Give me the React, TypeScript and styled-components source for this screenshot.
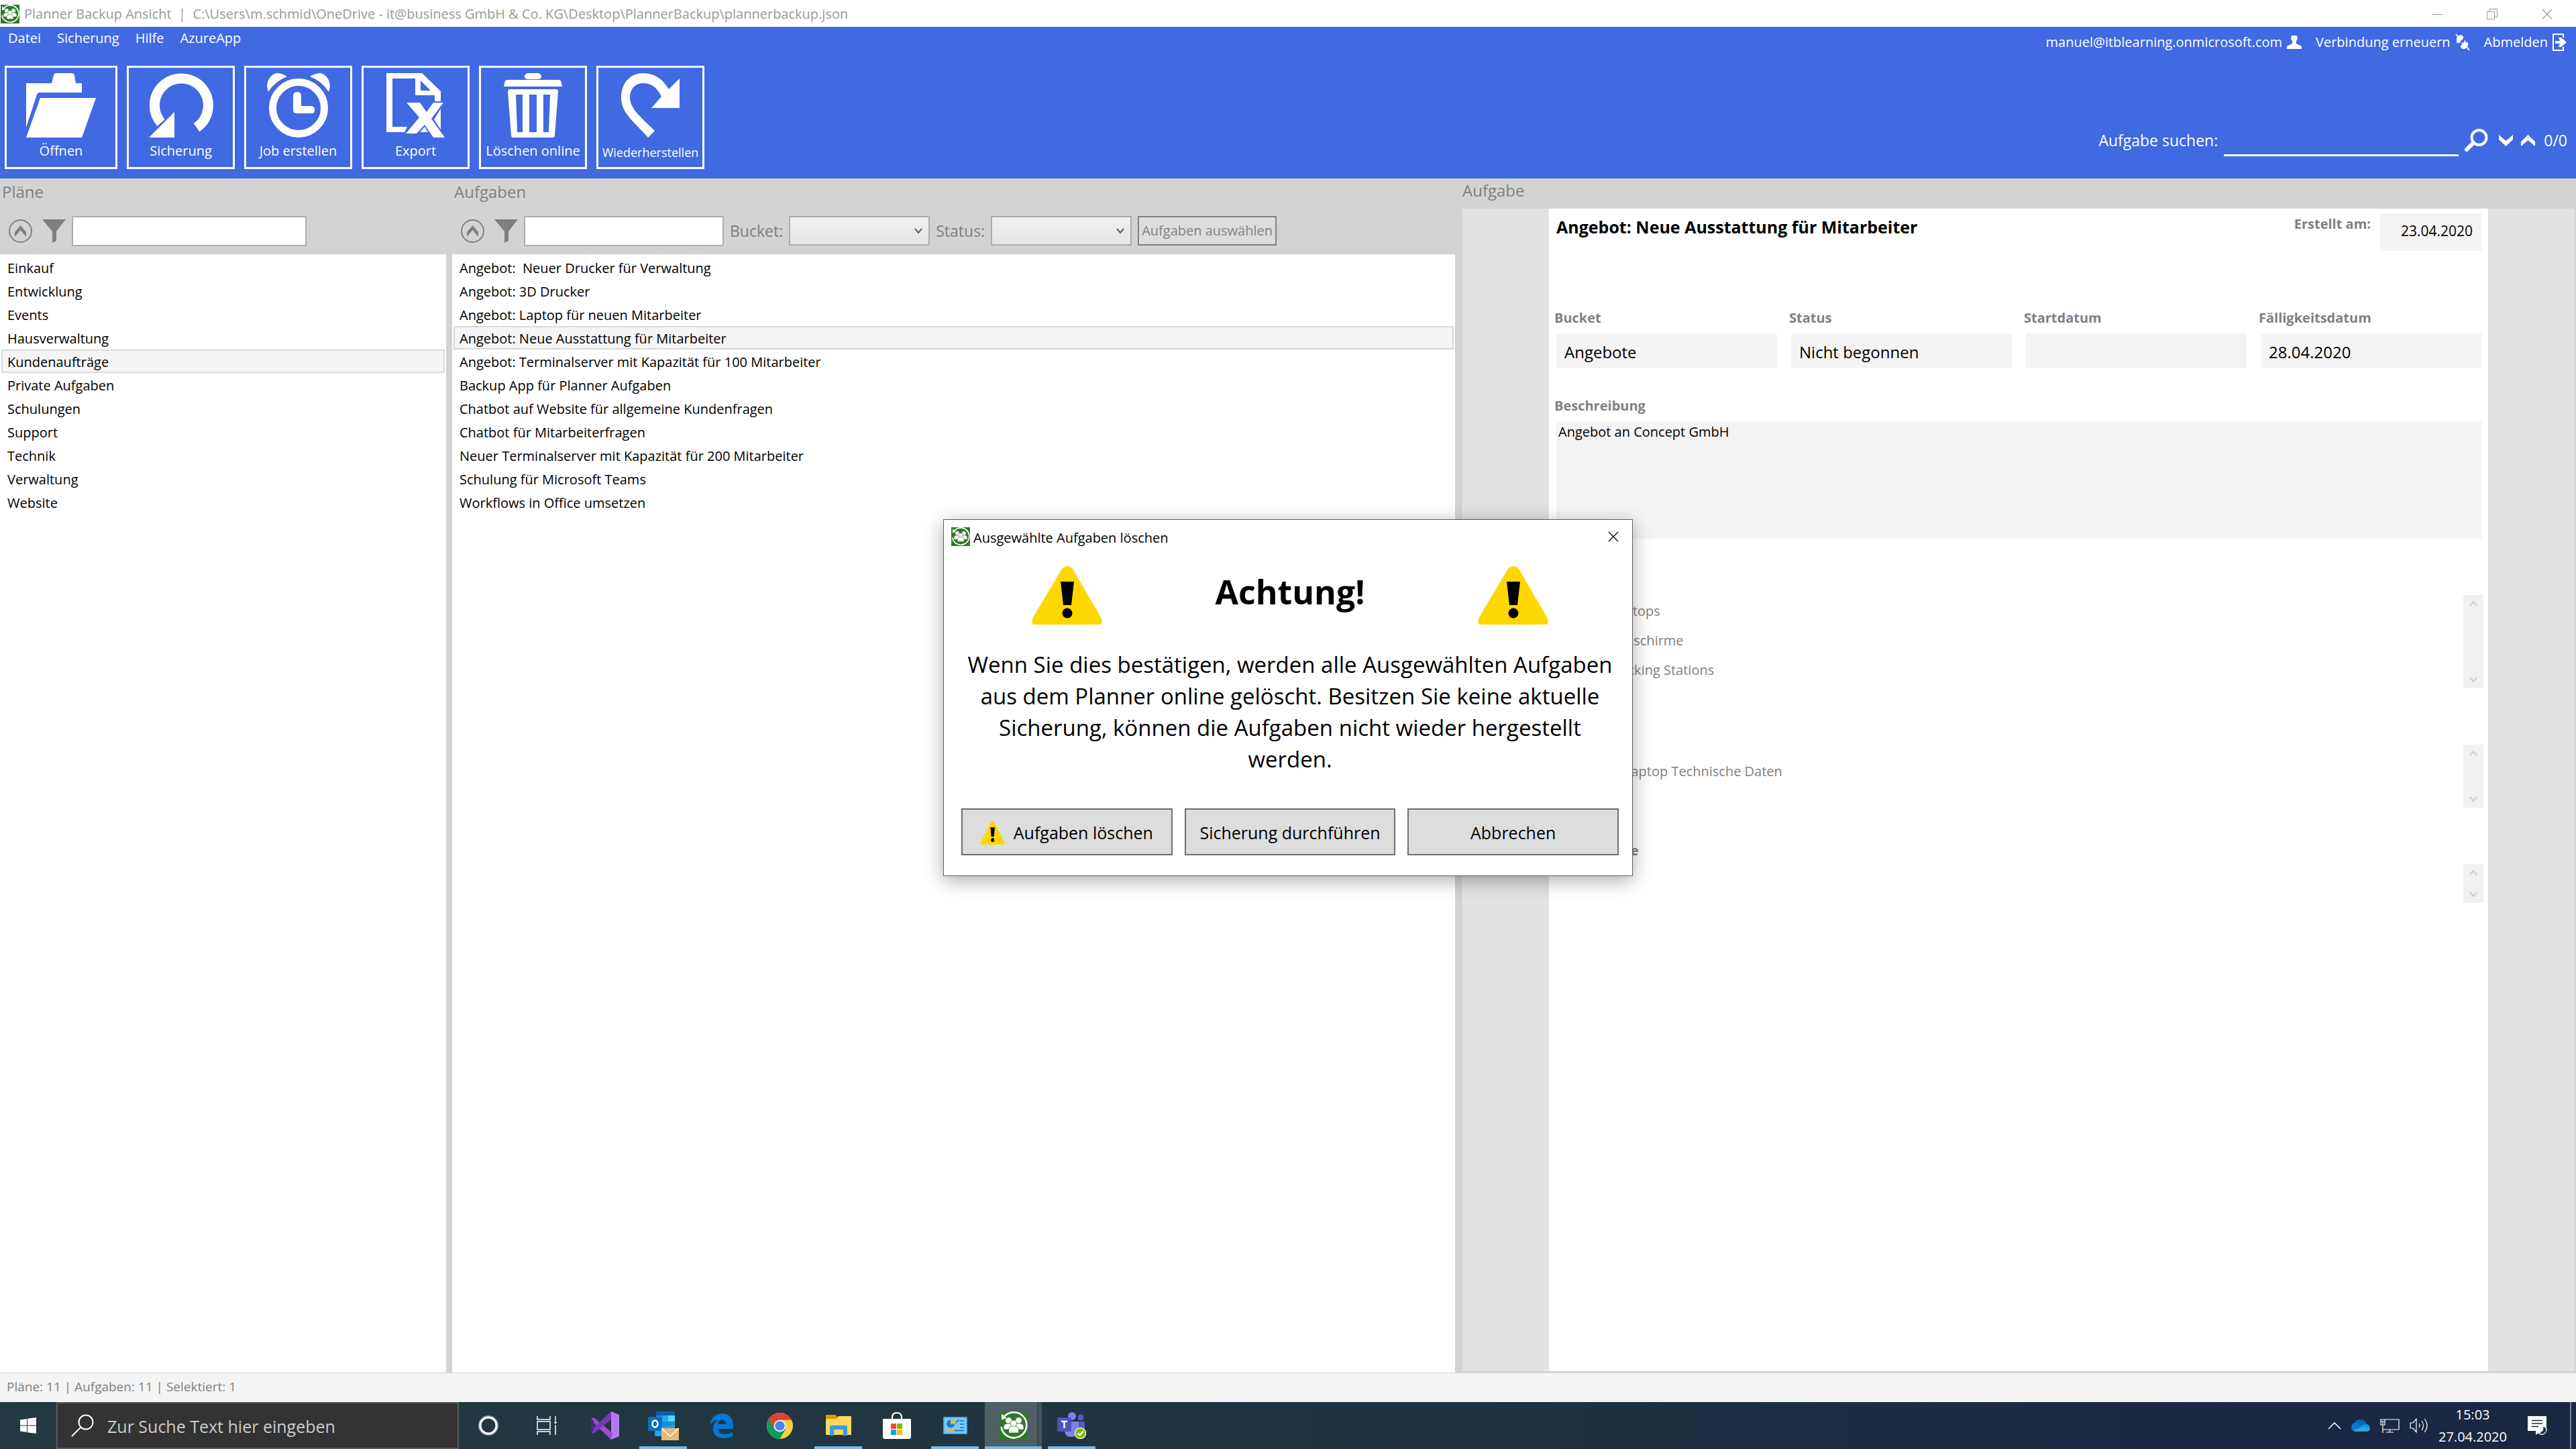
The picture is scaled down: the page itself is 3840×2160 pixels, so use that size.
import React from "react";
import styled, { createGlobalStyle } from "styled-components";

const Global = createGlobalStyle`
  * { box-sizing: border-box; }
  html, body { margin: 0; padding: 0; }
  body, button, input, select, textarea {
    font-family: "Open Sans", "Noto Sans", sans-serif;
    font-size: 20px;
    line-height: 28px;
    color: #000;
  }
  button { border: 0; padding: 0; background: none; cursor: pointer; }
  h1, h2, h3, p, ul { margin: 0; padding: 0; font-weight: 400; }
  ul { list-style: none; }
  svg { display: block; flex: none; }
`;

const Screen = styled.div`
  position: relative;
  min-height: 100vh;
  display: flex;
  flex-direction: column;
  background: #fff;
  overflow: hidden;
`;

/* ---------- window frame ---------- */

const TitleBar = styled.header`
  display: flex;
  align-items: center;
  gap: 7px;
  height: 40px;
  padding: 2px 35px 0 1px;
  color: #999;
`;

const TitleText = styled.h1`
  flex: 1;
  font-size: 20px;
  white-space: pre;
`;

const WindowControls = styled.div`
  display: flex;
  gap: 66px;
`;

const Ribbon = styled.div`
  display: flex;
  justify-content: space-between;
  height: 226px;
  background: #4169e1;
  color: #fff;
`;

const RibbonLeft = styled.div`
  display: flex;
  flex-direction: column;
  gap: 24px;
`;

const Menu = styled.nav`
  display: flex;
  gap: 24px;
  height: 34px;
  padding-left: 12px;
`;

const MenuItem = styled.button`
  color: #fff;
`;

const Tools = styled.div`
  display: flex;
  gap: 14px;
  padding-left: 7px;
`;

const Tool = styled.button<{ $wide?: boolean }>`
  display: flex;
  flex-direction: column;
  align-items: center;
  gap: 6px;
  width: ${(p) => (p.$wide ? 168 : 161)}px;
  height: 154px;
  padding-top: 8px;
  border: 3px solid #fff;
  color: #fff;
`;

const ToolLabel = styled.span<{ $small?: boolean }>`
  font-size: ${(p) => (p.$small ? 18 : 20)}px;
  line-height: ${(p) => (p.$small ? 32 : 28)}px;
  white-space: nowrap;
`;

const RibbonRight = styled.div`
  display: flex;
  flex-direction: column;
  align-items: flex-end;
  justify-content: space-between;
  padding: 3px 13px 33px 0;
`;

const Account = styled.div`
  display: flex;
  align-items: center;
  gap: 21px;
  height: 40px;
`;

const AccountItem = styled.button`
  display: flex;
  align-items: center;
  gap: 7px;
  color: #fff;
`;

const Search = styled.div`
  display: flex;
  align-items: center;
  gap: 9px;
  height: 43px;
  font-size: 23px;
  > :not(input) { margin-bottom: 5px; }
`;

const SearchInput = styled.input`
  width: 350px;
  height: 43px;
  border: 0;
  border-bottom: 3px solid #fff;
  background: transparent;
  color: #fff;
  outline: 0;
`;

const Hits = styled.span`
  padding-left: 4px;
`;

const IconButton = styled.button<{ $pad?: number }>`
  display: flex;
  padding-left: ${(p) => p.$pad ?? 0}px;
`;

/* ---------- panels ---------- */

const Main = styled.main`
  flex: 1;
  display: grid;
  grid-template-columns: 665fr 9px 1495fr 11px 1660fr;
  background: #d3d3d3;
`;

const Panel = styled.section`
  display: flex;
  flex-direction: column;
  min-width: 0;
`;

const PanelTitle = styled.h2<{ $detail?: boolean }>`
  height: ${(p) => (p.$detail ? 45 : 43)}px;
  padding-left: ${(p) => (p.$detail ? 0 : 3)}px;
  font-size: 24px;
  line-height: ${(p) => (p.$detail ? 36 : 40)}px;
  color: #808080;
`;

const FilterBar = styled.div`
  display: flex;
  align-items: center;
  height: 70px;
  padding-left: 13px;
  gap: 9px;
  color: #808080;
`;

const FilterIcons = styled.div`
  display: flex;
  gap: 15px;
`;

const FilterInput = styled.input<{ $width: number }>`
  width: ${(p) => p.$width}px;
  height: 45px;
  border: 2px solid #abadb3;
  background: #fff;
  outline: 0;
`;

const FilterLabel = styled.label`
  font-size: 23px;
`;

const SelectBox = styled.span`
  display: inline-grid;
  align-items: center;
  justify-items: end;
  > * { grid-area: 1 / 1; }
  > svg { margin-right: 11px; pointer-events: none; }
`;

const Select = styled.select`
  appearance: none;
  width: 210px;
  height: 44px;
  border: 2px solid #acacac;
  border-radius: 0;
  background: linear-gradient(#f0f0f0, #e5e5e5);
`;

const PickButton = styled.button`
  height: 44px;
  padding: 0 4px;
  border: 2px solid #808080;
  background: #ddd;
  color: #838383;
  white-space: nowrap;
`;

const List = styled.ul`
  flex: 1;
  padding: 2px;
  background: #fff;
`;

const Row = styled.button<{ $active: boolean }>`
  display: block;
  width: 100%;
  height: 35px;
  padding: 2px 7px 0;
  border: 2px solid ${(p) => (p.$active ? "#dadada" : "transparent")};
  background: ${(p) => (p.$active ? "#f5f5f5" : "transparent")};
  line-height: 28px;
  text-align: left;
  white-space: pre;
`;

const DetailArea = styled.div`
  flex: 1;
  display: flex;
  justify-content: center;
  border-right: 2px solid #d3d3d3;
  border-bottom: 2px solid #d3d3d3;
  background: #e2e2e2;
`;

const Card = styled.article`
  width: 1400px;
  padding: 7px 10px 0 11px;
  background: #fff;
`;

const CardHead = styled.div`
  display: flex;
  height: 140px;
`;

const CardTitle = styled.h3`
  flex: 1;
  font-size: 25px;
  line-height: 40px;
  font-weight: 700;
`;

const Caption = styled.label`
  display: block;
  margin-left: -3px;
  font-size: 20px;
  line-height: 32px;
  font-weight: 700;
  color: #808080;
`;

const DateField = styled.input`
  width: 151px;
  height: 56px;
  margin-left: 14px;
  padding: 0 13px 4px 0;
  border: 0;
  background: #f4f4f4;
  font-size: 21px;
  text-align: right;
`;

const Fields = styled.div`
  display: grid;
  grid-template-columns: repeat(4, 1fr);
  gap: 21px;
  padding-bottom: 40px;
`;

const Field = styled.input`
  display: block;
  width: 100%;
  height: 52px;
  margin-top: 7px;
  padding: 2px 12px 0;
  border: 0;
  background: #f4f4f4;
  font-size: 24px;
`;

const Description = styled.textarea`
  display: block;
  width: 100%;
  height: 175px;
  margin-top: 7px;
  padding: 2px 3px;
  border: 0;
  background: #f4f4f4;
  resize: none;
  outline: 0;
`;

const Group = styled.section<{ $untitled?: boolean }>`
  padding-top: ${(p) => (p.$untitled ? 80 : 48)}px;
`;

const GroupBody = styled.div<{ $height: number }>`
  display: flex;
  justify-content: space-between;
  height: ${(p) => p.$height}px;
  margin: 4px -3px 0 0;
`;

const GroupTitle = styled(Caption).attrs({ as: "h3" })`
  margin-left: -9px;
`;

const Items = styled.ul<{ $top?: number }>`
  display: flex;
  flex-direction: column;
  padding-top: ${(p) => p.$top ?? 2}px;
  color: #808080;
`;

const Item = styled.li`
  display: flex;
  align-items: center;
  height: 44px;
  padding-left: 32px;
`;

const ItemLabel = styled.label`
  display: flex;
  align-items: center;
  gap: 24px;
`;

const Check = styled.input`
  width: 24px;
  height: 24px;
  margin: 0;
`;

const Link = styled.a`
  padding-left: 69px;
  color: #808080;
  text-decoration: none;
`;

const Scrollbar = styled.div`
  display: flex;
  flex-direction: column;
  align-items: center;
  justify-content: space-between;
  width: 30px;
  padding: 8px 0;
  background: #f0f0f0;
`;

const StatusBar = styled.footer`
  height: 44px;
  padding: 3px 10px;
  border-top: 1px solid #cdd6f4;
  background: #f4f4f4;
  font-size: 19px;
  line-height: 34px;
  color: #808080;
`;

/* ---------- dialog ---------- */

const Overlay = styled.div`
  position: absolute;
  inset: 0 0 80px;
  display: flex;
  align-items: center;
  justify-content: center;
`;

const Dialog = styled.div`
  width: 1028px;
  padding: 0 20px 30px 26px;
  border: 1px solid #5f5f5f;
  background: #fff;
  box-shadow: 0 6px 26px rgba(0, 0, 0, 0.34);
`;

const DialogBar = styled.div`
  display: flex;
  align-items: center;
  gap: 5px;
  height: 50px;
  margin-left: -15px;
`;

const DialogTitle = styled.h2`
  flex: 1;
  padding-top: 3px;
  font-size: 20px;
`;

const DialogHead = styled.div`
  display: grid;
  grid-template-columns: repeat(3, 1fr);
  gap: 18px;
  align-items: center;
  justify-items: center;
  height: 125px;
`;

const Attention = styled.h3`
  padding-bottom: 12px;
  font-size: 50px;
  line-height: 60px;
  font-weight: 700;
`;

const Message = styled.p`
  margin-top: 17px;
  height: 238px;
  font-size: 33px;
  line-height: 47px;
  text-align: center;
`;

const Actions = styled.div`
  display: grid;
  grid-template-columns: repeat(3, 1fr);
  gap: 18px;
`;

const ActionButton = styled.button`
  display: flex;
  align-items: center;
  justify-content: center;
  gap: 14px;
  height: 70px;
  padding-top: 2px;
  border: 2px solid #707070;
  background: #ddd;
  font-size: 25px;
`;

/* ---------- taskbar ---------- */

const Taskbar = styled.div`
  display: flex;
  height: 70px;
  background: linear-gradient(90deg, #233a42 0%, #20343f 45%, #1c2843 85%, #1a2742 100%);
  color: #fff;
`;

const StartButton = styled.button`
  display: flex;
  align-items: center;
  justify-content: center;
  width: 84px;
`;

const TaskSearch = styled.label`
  display: flex;
  align-items: center;
  gap: 20px;
  width: 600px;
  padding-left: 20px;
  border: 2px solid #5c5c5c;
  background: #333;
`;

const TaskSearchInput = styled.input`
  flex: 1;
  border: 0;
  padding: 2px 0 0;
  background: transparent;
  color: #ccc;
  font-size: 25px;
  line-height: 36px;
  outline: 0;
  &::placeholder { color: #ccc; opacity: 1; }
`;

const TaskButton = styled.button<{ $open?: boolean; $active?: boolean }>`
  display: flex;
  align-items: center;
  justify-content: center;
  width: ${(p) => (p.$active ? 85 : 71)}px;
  margin: 0 ${(p) => (p.$active ? 1 : 8)}px;
  border-top: 4px solid transparent;
  border-bottom: 4px solid ${(p) => (p.$open || p.$active ? "#76b9ed" : "transparent")};
  background: ${(p) =>
    p.$active ? "linear-gradient(90deg, #4e5f66 78px, #33444d 78px, #33444d 80px, #46555c 80px)" : "none"};
  background-clip: border-box;
  background-origin: border-box;
`;

const Tray = styled.div`
  display: flex;
  align-items: center;
  margin-left: auto;
`;

const TrayIcons = styled.div`
  display: flex;
  align-items: center;
  gap: 15px;
`;

const Clock = styled.time`
  display: block;
  padding: 0 31px 0 16px;
  font-size: 20px;
  line-height: 33px;
  text-align: center;
`;

const TrayEdge = styled.span`
  width: 9px;
  height: 70px;
  margin-left: 34px;
  border-left: 2px solid #7c8494;
`;

/* ---------- drawings ---------- */

const Logo = ({ size }: { size: number }) => (
  <svg width={size} height={size} viewBox="0 0 42 42">
    <rect width="42" height="42" fill="#31782c" />
    <path d="M6 9A19 19 0 1 1 2.500 23" fill="none" stroke="#fff" strokeWidth="2.500" />
    <path d="M3 3.500V12.500L10.500 10Z" fill="#fff" />
    <g fill="#fff" stroke="#31782c" strokeWidth="0.800">
      <circle cx="13.500" cy="13.500" r="4.800" />
      <circle cx="28.500" cy="13.500" r="4.800" />
      <path d="M6 27v-3q0-6 6-6h4q4 0 4 5v4z" />
      <path d="M36 27v-3q0-6-6-6h-4q-4 0-4 5v4z" />
      <circle cx="21" cy="18" r="5" />
      <path d="M13.500 32v-4q0-6 6-6h3q6 0 6 6v4z" />
    </g>
  </svg>
);

const FolderIcon = () => (
  <svg width="104" height="96" viewBox="0 0 104 96" fill="#fff">
    <path d="M0 81V15H38L41 3Q42 0 45 0H68Q71 0 72 3L74 15H83V29H20Q17 29 16 32Z" />
    <path d="M21 37H104L83 96H0Z" />
  </svg>
);

const BackupIcon = () => (
  <svg width="96" height="96" viewBox="0 0 96 96">
    <path d="M71 81A40 40 0 1 0 18 74" fill="none" stroke="#fff" strokeWidth="15" />
    <path d="M38 58V96H0Z" fill="#fff" />
  </svg>
);

const AlarmIcon = () => (
  <svg width="97" height="96" viewBox="0 0 97 96" fill="#fff">
    <circle cx="49" cy="52" r="38.500" fill="none" stroke="#fff" strokeWidth="11" />
    <path d="M41 34q0-6 6-6t6 6v15h15q5 0 5 6t-5 5H46q-5 0-5-5z" />
    <path d="M32 5Q24 0 16 0Q3 4 2 20L4 28Q14 12 32 5Z" />
    <path d="M66 5Q74 0 82 0Q95 4 96 20L94 28Q84 12 66 5Z" />
  </svg>
);

const ExportIcon = () => (
  <svg width="87" height="96" viewBox="0 0 87 96" fill="#fff">
    <path fillRule="evenodd" d="M0 0H53L81 27V42H72V33H43V8H9V80H31L27 88H0ZM51 11V26H66Z" />
    <path d="M30 44H50L60 58L70 44H85L67 68L87 96H70L57 77L45 90H29L49 66Z" />
    <path d="M81 53V84L71 69ZM57 80L62 88H50Z" />
  </svg>
);

const TrashIcon = () => (
  <svg width="87" height="96" viewBox="0 0 87 96" fill="#fff">
    <path d="M35 0H51Q56 1 56 5T51 9H35Q31 8 31 5T35 0Z" />
    <path d="M4 10H83Q86 11 87 20H0Q1 11 4 10Z" />
    <path fillRule="evenodd" d="M9 24H78Q81 24 81 28L76 93Q76 96 73 96H14Q11 96 11 93L6 28Q6 24 9 24ZM18 32L20 88H28V32ZM38 32V88H49V32ZM59 32V88H67L69 32Z" />
  </svg>
);

const RestoreIcon = () => (
  <svg width="87" height="96" viewBox="0 0 87 96" fill="#fff">
    <path d="M40 96C20 73 0 60 0 37C0 12 16 0 33 0C50 0 62 9 71 24L87 8V52H45L60 35C53 21 45 15 33 15C21 15 13 23 13 36C13 53 30 66 50 86Z" />
  </svg>
);

const PersonIcon = () => (
  <svg width="22" height="22" viewBox="0 0 22 22" fill="#fff">
    <path d="M7 1h8l1 5-2 3v4l8 4v4H0v-4l8-4V9L6 6z" />
  </svg>
);

const PlugIcon = () => (
  <svg width="22" height="26" viewBox="0 0 22 26" fill="#fff" stroke="#fff">
    <path d="M1 1L5 6M17 20L21 25" strokeWidth="2" />
    <path d="M3 14Q1 5 6 3Q11 2 12 6L10 9L8 10L7 13Z" strokeWidth="1" />
    <path d="M15 10L14 14L18 13Q20 20 15 22Q9 24 8 19L11 16L9 14L12 15Z" strokeWidth="1" />
  </svg>
);

const LogoutIcon = () => (
  <svg width="22" height="26" viewBox="0 0 22 26" fill="none" stroke="#fff">
    <path d="M16 6V1H1V25H16V20" strokeWidth="2" />
    <path d="M4 11H11L9 6H13L21 13L13 20H9L11 15H4Z" fill="#fff" stroke="none" />
  </svg>
);

const SearchIcon = () => (
  <svg width="35" height="35" viewBox="0 0 35 35" fill="none" stroke="#fff">
    <circle cx="21.500" cy="13" r="11" strokeWidth="4" />
    <path d="M13 21L3 31" strokeWidth="6" strokeLinecap="round" />
  </svg>
);

const ChevronIcon = ({ up }: { up?: boolean }) => (
  <svg width="21" height="17" viewBox="0 0 21 17" fill="#fff">
    <path d={up ? "M0 17V10L10.500 0L21 10V17L10.500 8Z" : "M0 0V7L10.500 17L21 7V0L10.500 9Z"} />
  </svg>
);

const CollapseIcon = () => (
  <svg width="35" height="35" viewBox="0 0 35 35">
    <circle cx="17.500" cy="17.500" r="16.500" fill="none" stroke="#808080" strokeWidth="2" />
    <path d="M9 26V19L17.500 9L26 19V26L17.500 16Z" fill="#808080" />
  </svg>
);

const FunnelIcon = () => (
  <svg width="35" height="35" viewBox="0 0 35 35" fill="#808080">
    <path d="M0 0H35L21 18V32L15 35V18Z" />
  </svg>
);

const SmallChevron = ({ up, color }: { up?: boolean; color: string }) => (
  <svg width="12" height="10" viewBox="0 0 12 10" fill="none" stroke={color} strokeWidth="2">
    <path d={up ? "M1 8L6 2L11 8" : "M1 2L6 8L11 2"} />
  </svg>
);

const WarningIcon = ({ width, height }: { width: number; height: number }) => (
  <svg width={width} height={height} viewBox="0 0 105 87" preserveAspectRatio="none">
    <path d="M45 4Q53-4 61 4L103 76Q107 87 101 87H4Q-2 87 2 76Z" fill="#ffd700" />
    <path d="M43 23H63L59 58H47Z" />
    <circle cx="53" cy="70" r="7.500" />
  </svg>
);

const CloseIcon = ({ color }: { color: string }) => (
  <svg width="16" height="16" viewBox="0 0 16 16" stroke={color} strokeWidth="1.300">
    <path d="M1 1L15 15M15 1L1 15" />
  </svg>
);

const WindowsIcon = () => (
  <svg width="24" height="24" viewBox="0 0 24 24" fill="#fff">
    <path d="M0 3.500L10 2V11.500H0ZM11 1.800L24 0V11.500H11ZM0 12.500H10V22L0 20.500ZM11 12.500H24V24L11 22.200Z" />
  </svg>
);

const TaskSearchIcon = () => (
  <svg width="34" height="34" viewBox="0 0 34 34" fill="none" stroke="#fff" strokeWidth="2">
    <circle cx="22" cy="12" r="10.500" />
    <path d="M14.500 19.500L1 33" />
  </svg>
);

const CortanaIcon = () => (
  <svg width="30" height="30" viewBox="0 0 30 30" fill="none">
    <circle cx="15" cy="15" r="13" stroke="#8f9ba0" strokeWidth="4" />
    <circle cx="15" cy="15" r="12" stroke="#fff" strokeWidth="3" />
  </svg>
);

const TaskViewIcon = () => (
  <svg width="30" height="28" viewBox="0 0 30 28" fill="none" stroke="#fff" strokeWidth="1.500">
    <path d="M1 0V5H20V0M1 8H20V20H1ZM1 28V23H20V28M28 0V7M28 13V28" />
    <rect x="26.500" y="8" width="3" height="3" fill="#fff" stroke="none" />
  </svg>
);

const VisualStudioIcon = () => (
  <svg width="42" height="42" viewBox="0 0 42 42">
    <path d="M30 0L42 5V37L30 42Z" fill="#b179f1" />
    <path d="M0 11L4 9L32 32L30 42L4 17V28L0 31Z" fill="#9b4fd0" />
    <path d="M30 0V12L4 33L0 31V28Z" fill="#7b38ba" />
    <path d="M0 11L4 14V28L0 31Z" fill="#52218a" />
  </svg>
);

const OutlookIcon = () => (
  <svg width="46" height="43" viewBox="0 0 46 43">
    <rect x="12" y="0" width="28" height="28" rx="2" fill="#0a5fb0" />
    <rect x="12" y="6" width="9" height="9" fill="#1a86d8" />
    <rect x="21" y="6" width="9" height="9" fill="#28a8ea" />
    <rect x="30" y="6" width="10" height="9" fill="#50d9ff" />
    <rect x="21" y="15" width="19" height="9" fill="#1490df" />
    <path d="M10 24L40 20V37H12Q10 37 10 35Z" fill="#28a0ea" />
    <rect x="0" y="8" width="21" height="21" rx="2" fill="#0f6cbd" />
    <ellipse cx="10.500" cy="18.500" rx="4" ry="5" fill="none" stroke="#fff" strokeWidth="2.500" />
    <rect x="20" y="25" width="26" height="18" fill="#e8b878" />
    <path d="M20 25L33 37L46 25" fill="none" stroke="#fff" strokeWidth="1.500" />
  </svg>
);

const EdgeIcon = () => (
  <svg width="36" height="37" viewBox="0 0 36 37">
    <path d="M0 17Q4 0 19 0Q35 1 35 19V23H12Q13 31 23 31Q29 31 34 28V34Q28 37 21 37Q5 36 5 23Q5 13 14 9Q4 11 0 17ZM12 16H24Q24 9 18 9Q13 10 12 16Z" fill="#0078d7" fillRule="evenodd" />
  </svg>
);

const ChromeIcon = () => (
  <svg width="39" height="39" viewBox="0 0 40 40">
    <circle cx="20" cy="20" r="20" fill="#ffcd40" />
    <path d="M20 20L2.700 10A20 20 0 0 0 20 40L28.700 25Z" fill="#109d58" />
    <path d="M20 20L2.700 10A20 20 0 0 1 37.300 10H20Z" fill="#da4437" />
    <path d="M20 11H37.800A20 20 0 0 0 2.700 10L12 25Z" fill="#da4437" />
    <circle cx="20" cy="20" r="9.200" fill="#f1f1f1" />
    <circle cx="20" cy="20" r="7.300" fill="#4285f4" />
  </svg>
);

const ExplorerIcon = () => (
  <svg width="38" height="32" viewBox="0 0 38 32">
    <path d="M0 1Q0 0 1 0H14L18 4V8H0Z" fill="#dc9a00" />
    <path d="M1 6H16L19 2H37Q38 2 38 3V30H1Q0 30 0 29V7Z" fill="#ffd75e" />
    <path d="M6 31V18Q6 16 8 16H30Q32 16 32 18V31H26V22H12V31Z" fill="#3a9be0" />
  </svg>
);

const StoreIcon = () => (
  <svg width="42" height="40" viewBox="0 0 42 40">
    <path d="M14 11V8Q14 1 21 1T28 8V11" fill="none" stroke="#fff" strokeWidth="2" />
    <path d="M0 10H42V37Q42 40 39 40H3Q0 40 0 37Z" fill="#fff" />
    <rect x="12" y="17" width="8" height="8" fill="#f25022" />
    <rect x="21" y="17" width="8" height="8" fill="#7fba00" />
    <rect x="12" y="26" width="8" height="8" fill="#00a4ef" />
    <rect x="21" y="26" width="8" height="8" fill="#ffb900" />
  </svg>
);

const ControlPanelIcon = () => (
  <svg width="36" height="26" viewBox="0 0 36 26">
    <rect width="36" height="26" rx="1" fill="#3ba0dc" />
    <rect x="1.500" y="1.500" width="33" height="23" fill="#7bcbf7" />
    <circle cx="11" cy="10.500" r="6" fill="#1f7fc4" />
    <path d="M11 4A6.500 6.500 0 0 1 17.500 10.500H11Z" fill="#fbb31f" />
    <path d="M19 10q2-6 5-4M25 6h6M25 11h6M25 16h6" stroke="#2a86c8" strokeWidth="2" fill="none" />
    <path d="M5 20.500h12" stroke="#fbb31f" strokeWidth="2" />
    <path d="M17 20.500h14" stroke="#1f7fc4" strokeWidth="2" />
  </svg>
);

const TeamsIcon = () => (
  <svg width="44" height="40" viewBox="0 0 44 40">
    <circle cx="22" cy="6" r="6" fill="#7b83eb" />
    <circle cx="35" cy="8" r="4.500" fill="#5059c9" />
    <path d="M26 14H41V26Q41 34 33 34H26Z" fill="#5059c9" />
    <path d="M11 14H32V27Q31 37 21 37T11 27Z" fill="#7b83eb" />
    <rect x="0" y="8" width="21" height="21" rx="1.500" fill="#4b53bc" />
    <path d="M6 14H15M10.500 14V24" stroke="#fff" strokeWidth="2.500" />
    <circle cx="34.500" cy="31.500" r="8" fill="#7fba00" stroke="#e8f3d6" strokeWidth="1.500" />
    <path d="M30.500 31.500L33.500 34.500L39 28.500" fill="none" stroke="#fff" strokeWidth="2.200" />
  </svg>
);

const TrayChevron = () => (
  <svg width="20" height="11" viewBox="0 0 20 11" fill="none" stroke="#fff" strokeWidth="1.500">
    <path d="M1 10L10 1L19 10" />
  </svg>
);

const CloudIcon = () => (
  <svg width="28" height="18" viewBox="0 0 28 18">
    <path d="M4 5Q8 0 14 0Q21 0 23 7L14 12L4 8Z" fill="#0364b8" />
    <path d="M6 5Q0 6 0 12Q0 15 3 17L17 10L10 6Q8 5 6 5Z" fill="#0f78d4" />
    <path d="M15 9Q19 6 23 7Q28 8 28 13L20 15Z" fill="#1490df" />
    <path d="M3 16.500L17 10L28 14Q27 18 23 18H6Q4 18 3 16.500Z" fill="#28a8ea" />
  </svg>
);

const NetworkIcon = () => (
  <svg width="29" height="21" viewBox="0 0 29 21" fill="none" stroke="#fff" strokeWidth="1.200">
    <path d="M7 1H28V16H4V10M4 16V21M14.500 16V20M9 20H20M1 1H7V9H1ZM1 4H7M4 4V9" />
  </svg>
);

const SpeakerIcon = () => (
  <svg width="27" height="22" viewBox="0 0 27 22" fill="none" stroke="#fff" strokeWidth="1.200">
    <path d="M1 7H5L10 1V21L5 15H1ZM14 8q2 3 0 6M18 4q5 7 0 14M22 1q8 10 0 20" />
  </svg>
);

const NoticeIcon = () => (
  <svg width="29" height="29" viewBox="0 0 29 29">
    <path d="M0 0H28V22H20L12 28V22H0Z" fill="#fff" />
    <path d="M6 6.500H22M6 11H22M6 15.500H16" stroke="#1a2742" strokeWidth="1.500" />
    <path d="M22 15Q25 23 16 25Q19 28 23 27Q28 25 28 19Q26 15 22 15Z" fill="#1a2742" stroke="#fff" strokeWidth="1.300" />
  </svg>
);

/* ---------- data ---------- */

const plans = [
  "Einkauf", "Entwicklung", "Events", "Hausverwaltung", "Kundenaufträge", "Private Aufgaben",
  "Schulungen", "Support", "Technik", "Verwaltung", "Website",
];

const tasks = [
  "Angebot:  Neuer Drucker für Verwaltung",
  "Angebot: 3D Drucker",
  "Angebot: Laptop für neuen Mitarbeiter",
  "Angebot: Neue Ausstattung für Mitarbeiter",
  "Angebot: Terminalserver mit Kapazität für 100 Mitarbeiter",
  "Backup App für Planner Aufgaben",
  "Chatbot auf Website für allgemeine Kundenfragen",
  "Chatbot für Mitarbeiterfragen",
  "Neuer Terminalserver mit Kapazität für 200 Mitarbeiter",
  "Schulung für Microsoft Teams",
  "Workflows in Office umsetzen",
];

const tools = [
  { label: "Öffnen", icon: <FolderIcon />, wide: true },
  { label: "Sicherung", icon: <BackupIcon /> },
  { label: "Job erstellen", icon: <AlarmIcon /> },
  { label: "Export", icon: <ExportIcon /> },
  { label: "Löschen online", icon: <TrashIcon /> },
  { label: "Wiederherstellen", icon: <RestoreIcon />, small: true },
];

const fields = [
  { id: "bucket", label: "Bucket", value: "Angebote" },
  { id: "status", label: "Status", value: "Nicht begonnen" },
  { id: "start", label: "Startdatum", value: "" },
  { id: "due", label: "Fälligkeitsdatum", value: "28.04.2020" },
];

const taskApps = [
  { name: "Cortana", icon: <CortanaIcon /> },
  { name: "Taskansicht", icon: <TaskViewIcon /> },
  { name: "Visual Studio", icon: <VisualStudioIcon /> },
  { name: "Outlook", icon: <OutlookIcon />, open: true },
  { name: "Edge", icon: <EdgeIcon /> },
  { name: "Chrome", icon: <ChromeIcon /> },
  { name: "Explorer", icon: <ExplorerIcon />, open: true },
  { name: "Store", icon: <StoreIcon /> },
  { name: "Systemsteuerung", icon: <ControlPanelIcon />, open: true },
  { name: "Planner Backup", icon: <Logo size={42} />, active: true },
  { name: "Teams", icon: <TeamsIcon />, open: true },
];

const ListOf = ({ rows, selected }: { rows: string[]; selected: string }) => (
  <List>
    {rows.map((row) => (
      <li key={row}>
        <Row type="button" $active={row === selected}>{row}</Row>
      </li>
    ))}
  </List>
);

const Combo = ({ id }: { id: string }) => (
  <SelectBox>
    <Select id={id} defaultValue=""><option value="" /></Select>
    <SmallChevron color="#606060" />
  </SelectBox>
);

const Scroll = () => (
  <Scrollbar aria-hidden="true">
    <SmallChevron up color="#cdcdcd" />
    <SmallChevron color="#cdcdcd" />
  </Scrollbar>
);

const FilterTools = () => (
  <FilterIcons>
    <IconButton type="button" aria-label="Einklappen"><CollapseIcon /></IconButton>
    <IconButton type="button" aria-label="Filtern"><FunnelIcon /></IconButton>
  </FilterIcons>
);

export default function App() {
  return (
    <Screen>
      <Global />
      <TitleBar>
        <Logo size={28} />
        <TitleText>{"Planner Backup Ansicht  |  C:\\Users\\m.schmid\\OneDrive - it@business GmbH & Co. KG\\Desktop\\PlannerBackup\\plannerbackup.json"}</TitleText>
        <WindowControls>
          <IconButton type="button" aria-label="Minimieren">
            <svg width="16" height="16" viewBox="0 0 16 16" stroke="#999"><path d="M0 8.500H16" /></svg>
          </IconButton>
          <IconButton type="button" aria-label="Verkleinern">
            <svg width="16" height="16" viewBox="0 0 16 16" fill="none" stroke="#999">
              <path d="M0.500 4.500H11.500V15.500H0.500ZM4.500 4V0.500H15.500V12.500H12" />
            </svg>
          </IconButton>
          <IconButton type="button" aria-label="Schließen"><CloseIcon color="#999" /></IconButton>
        </WindowControls>
      </TitleBar>

      <Ribbon>
        <RibbonLeft>
          <Menu>
            {["Datei", "Sicherung", "Hilfe", "AzureApp"].map((m) => (
              <MenuItem type="button" key={m}>{m}</MenuItem>
            ))}
          </Menu>
          <Tools>
            {tools.map((t) => (
              <Tool type="button" key={t.label} $wide={t.wide}>
                {t.icon}
                <ToolLabel $small={t.small}>{t.label}</ToolLabel>
              </Tool>
            ))}
          </Tools>
        </RibbonLeft>
        <RibbonRight>
          <Account>
            <AccountItem type="button">manuel@itblearning.onmicrosoft.com<PersonIcon /></AccountItem>
            <AccountItem type="button">Verbindung erneuern<PlugIcon /></AccountItem>
            <AccountItem type="button">Abmelden<LogoutIcon /></AccountItem>
          </Account>
          <Search>
            <label htmlFor="search">Aufgabe suchen:</label>
            <SearchInput id="search" />
            <IconButton type="button" aria-label="Suchen"><SearchIcon /></IconButton>
            <IconButton type="button" aria-label="Weiter" $pad={7}><ChevronIcon /></IconButton>
            <IconButton type="button" aria-label="Zurück" $pad={3}><ChevronIcon up /></IconButton>
            <Hits>0/0</Hits>
          </Search>
        </RibbonRight>
      </Ribbon>

      <Main>
        <Panel>
          <PanelTitle>Pläne</PanelTitle>
          <FilterBar>
            <FilterTools />
            <FilterInput $width={350} aria-label="Pläne filtern" />
          </FilterBar>
          <ListOf rows={plans} selected="Kundenaufträge" />
        </Panel>
        <span />
        <Panel>
          <PanelTitle>Aufgaben</PanelTitle>
          <FilterBar>
            <FilterTools />
            <FilterInput $width={298} aria-label="Aufgaben filtern" />
            <FilterLabel htmlFor="filter-bucket">Bucket:</FilterLabel>
            <Combo id="filter-bucket" />
            <FilterLabel htmlFor="filter-status">Status:</FilterLabel>
            <Combo id="filter-status" />
            <PickButton type="button">Aufgaben auswählen</PickButton>
          </FilterBar>
          <ListOf rows={tasks} selected="Angebot: Neue Ausstattung für Mitarbeiter" />
        </Panel>
        <span />
        <Panel>
          <PanelTitle $detail>Aufgabe</PanelTitle>
          <DetailArea>
            <Card>
              <CardHead>
                <CardTitle>Angebot: Neue Ausstattung für Mitarbeiter</CardTitle>
                <Caption htmlFor="created">Erstellt am:</Caption>
                <DateField id="created" readOnly value="23.04.2020" />
              </CardHead>
              <Fields>
                {fields.map((f) => (
                  <div key={f.id}>
                    <Caption htmlFor={f.id}>{f.label}</Caption>
                    <Field id={f.id} readOnly value={f.value} />
                  </div>
                ))}
              </Fields>
              <Caption htmlFor="description">Beschreibung</Caption>
              <Description id="description" readOnly value="Angebot an Concept GmbH" />
              <Group $untitled aria-label="Checkliste">
                <GroupBody $height={139}>
                  <Items>
                    {["Laptops", "Bildschirme", "Docking Stations"].map((c) => (
                      <Item key={c}>
                        <ItemLabel><Check type="checkbox" />{c}</ItemLabel>
                      </Item>
                    ))}
                  </Items>
                  <Scroll />
                </GroupBody>
              </Group>
              <Group $untitled aria-label="Anlagen">
                <GroupBody $height={94}>
                  <Items $top={18}>
                    <Item><Link href="#anlage">Laptop Technische Daten</Link></Item>
                  </Items>
                  <Scroll />
                </GroupBody>
              </Group>
              <Group>
                <GroupTitle>Kommentare</GroupTitle>
                <GroupBody $height={58}>
                  <Items />
                  <Scroll />
                </GroupBody>
              </Group>
            </Card>
          </DetailArea>
        </Panel>
      </Main>
      <StatusBar>Pläne: 11 | Aufgaben: 11 | Selektiert: 1</StatusBar>

      <Taskbar>
        <StartButton type="button" aria-label="Start"><WindowsIcon /></StartButton>
        <TaskSearch>
          <TaskSearchIcon />
          <TaskSearchInput aria-label="Suche" placeholder="Zur Suche Text hier eingeben" />
        </TaskSearch>
        {taskApps.map((a) => (
          <TaskButton type="button" key={a.name} aria-label={a.name} $open={a.open} $active={a.active}>
            {a.icon}
          </TaskButton>
        ))}
        <Tray>
          <TrayIcons>
            <TrayChevron />
            <CloudIcon />
            <NetworkIcon />
            <SpeakerIcon />
          </TrayIcons>
          <Clock>15:03<br />27.04.2020</Clock>
          <NoticeIcon />
          <TrayEdge />
        </Tray>
      </Taskbar>

      <Overlay>
        <Dialog role="dialog" aria-labelledby="dialog-title">
          <DialogBar>
            <Logo size={28} />
            <DialogTitle id="dialog-title">Ausgewählte Aufgaben löschen</DialogTitle>
            <IconButton type="button" aria-label="Dialog schließen"><CloseIcon color="#000" /></IconButton>
          </DialogBar>
          <DialogHead>
            <WarningIcon width={105} height={87} />
            <Attention>Achtung!</Attention>
            <WarningIcon width={105} height={87} />
          </DialogHead>
          <Message>
            Wenn Sie dies bestätigen, werden alle Ausgewählten Aufgaben aus dem Planner online gelöscht.
            Besitzen Sie keine aktuelle Sicherung, können die Aufgaben nicht wieder hergestellt werden.
          </Message>
          <Actions>
            <ActionButton type="button"><WarningIcon width={35} height={35} />Aufgaben löschen</ActionButton>
            <ActionButton type="button">Sicherung durchführen</ActionButton>
            <ActionButton type="button">Abbrechen</ActionButton>
          </Actions>
        </Dialog>
      </Overlay>
    </Screen>
  );
}
